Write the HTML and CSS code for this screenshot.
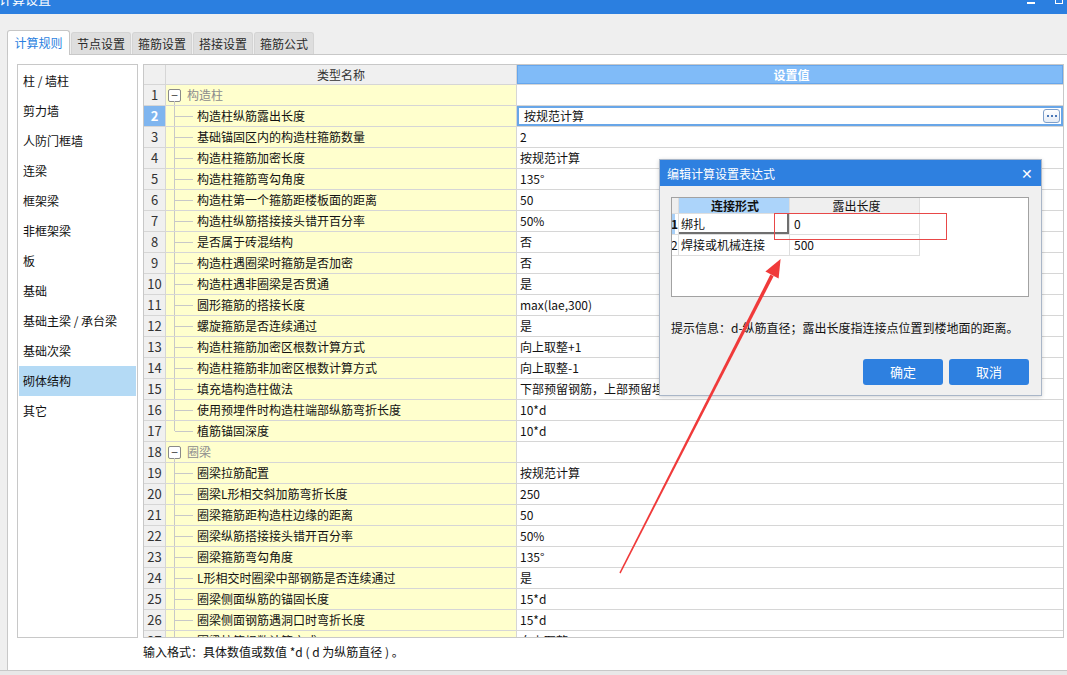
FILE: index.html
```html
<!DOCTYPE html>
<html lang="zh-CN">
<head>
<meta charset="utf-8">
<title>计算设置</title>
<link rel="stylesheet" href="styles.css">
</head>
<body>
<div class="window">
  <div class="titlebar">
    <span class="title">计算设置</span>
    <span class="win-min"></span>
    <span class="win-max"></span>
  </div>
  <div class="tabs">
    <div class="tab active">计算规则</div>
    <div class="tab">节点设置</div>
    <div class="tab">箍筋设置</div>
    <div class="tab">搭接设置</div>
    <div class="tab">箍筋公式</div>
  </div>
  <div class="panel">
    <div class="main">
      <div class="sidebar">
        <div class="side-item">柱 / 墙柱</div>
        <div class="side-item">剪力墙</div>
        <div class="side-item">人防门框墙</div>
        <div class="side-item">连梁</div>
        <div class="side-item">框架梁</div>
        <div class="side-item">非框架梁</div>
        <div class="side-item">板</div>
        <div class="side-item">基础</div>
        <div class="side-item">基础主梁 / 承台梁</div>
        <div class="side-item">基础次梁</div>
        <div class="side-item selected">砌体结构</div>
        <div class="side-item">其它</div>
      </div>
      <div class="grid">
        <div class="row head">
          <div class="num"></div>
          <div class="name">类型名称</div>
          <div class="val">设置值</div>
        </div>
        <div class="row group"><div class="num">1</div><div class="name"><span class="toggle">−</span><span class="gtext">构造柱</span></div><div class="val"></div></div>
        <div class="row child sel"><div class="num">2</div><div class="name">构造柱纵筋露出长度</div><div class="val"><span>按规范计算</span><span class="more"><i></i><i></i><i></i></span></div></div>
        <div class="row child"><div class="num">3</div><div class="name">基础锚固区内的构造柱箍筋数量</div><div class="val">2</div></div>
        <div class="row child"><div class="num">4</div><div class="name">构造柱箍筋加密长度</div><div class="val">按规范计算</div></div>
        <div class="row child"><div class="num">5</div><div class="name">构造柱箍筋弯勾角度</div><div class="val">135°</div></div>
        <div class="row child"><div class="num">6</div><div class="name">构造柱第一个箍筋距楼板面的距离</div><div class="val">50</div></div>
        <div class="row child"><div class="num">7</div><div class="name">构造柱纵筋搭接接头错开百分率</div><div class="val">50%</div></div>
        <div class="row child"><div class="num">8</div><div class="name">是否属于砖混结构</div><div class="val">否</div></div>
        <div class="row child"><div class="num">9</div><div class="name">构造柱遇圈梁时箍筋是否加密</div><div class="val">否</div></div>
        <div class="row child"><div class="num">10</div><div class="name">构造柱遇非圈梁是否贯通</div><div class="val">是</div></div>
        <div class="row child"><div class="num">11</div><div class="name">圆形箍筋的搭接长度</div><div class="val">max(lae,300)</div></div>
        <div class="row child"><div class="num">12</div><div class="name">螺旋箍筋是否连续通过</div><div class="val">是</div></div>
        <div class="row child"><div class="num">13</div><div class="name">构造柱箍筋加密区根数计算方式</div><div class="val">向上取整+1</div></div>
        <div class="row child"><div class="num">14</div><div class="name">构造柱箍筋非加密区根数计算方式</div><div class="val">向上取整-1</div></div>
        <div class="row child"><div class="num">15</div><div class="name">填充墙构造柱做法</div><div class="val">下部预留钢筋，上部预留埋件</div></div>
        <div class="row child"><div class="num">16</div><div class="name">使用预埋件时构造柱端部纵筋弯折长度</div><div class="val">10*d</div></div>
        <div class="row child last"><div class="num">17</div><div class="name">植筋锚固深度</div><div class="val">10*d</div></div>
        <div class="row group"><div class="num">18</div><div class="name"><span class="toggle">−</span><span class="gtext">圈梁</span></div><div class="val"></div></div>
        <div class="row child"><div class="num">19</div><div class="name">圈梁拉筋配置</div><div class="val">按规范计算</div></div>
        <div class="row child"><div class="num">20</div><div class="name">圈梁L形相交斜加筋弯折长度</div><div class="val">250</div></div>
        <div class="row child"><div class="num">21</div><div class="name">圈梁箍筋距构造柱边缘的距离</div><div class="val">50</div></div>
        <div class="row child"><div class="num">22</div><div class="name">圈梁纵筋搭接接头错开百分率</div><div class="val">50%</div></div>
        <div class="row child"><div class="num">23</div><div class="name">圈梁箍筋弯勾角度</div><div class="val">135°</div></div>
        <div class="row child"><div class="num">24</div><div class="name">L形相交时圈梁中部钢筋是否连续通过</div><div class="val">是</div></div>
        <div class="row child"><div class="num">25</div><div class="name">圈梁侧面纵筋的锚固长度</div><div class="val">15*d</div></div>
        <div class="row child"><div class="num">26</div><div class="name">圈梁侧面钢筋遇洞口时弯折长度</div><div class="val">15*d</div></div>
        <div class="row child"><div class="num">27</div><div class="name">圈梁拉筋根数计算方式</div><div class="val">向上取整+1</div></div>
      </div>
    </div>
    <div class="status">输入格式：具体数值或数值 *d ( d 为纵筋直径 ) 。</div>
  </div>
  <div class="footer"></div>
</div>

<div class="dialog">
  <div class="dlg-title">
    <span>编辑计算设置表达式</span>
    <span class="dlg-close">✕</span>
  </div>
  <div class="dlg-body">
    <div class="dlg-table">
      <div class="drow dhead">
        <div class="dnum"></div>
        <div class="dname">连接形式</div>
        <div class="dval">露出长度</div>
      </div>
      <div class="drow">
        <div class="dnum active">1</div>
        <div class="dname focus">绑扎</div>
        <div class="dval">0</div>
      </div>
      <div class="drow">
        <div class="dnum">2</div>
        <div class="dname">焊接或机械连接</div>
        <div class="dval">500</div>
      </div>
    </div>
    <div class="hint">提示信息：d-纵筋直径；露出长度指连接点位置到楼地面的距离。</div>
    <div class="buttons">
      <div class="btn">确定</div>
      <div class="btn">取消</div>
    </div>
  </div>
</div>

<div class="redbox"></div>

<svg class="arrow" width="1067" height="675" viewBox="0 0 1067 675">
  <polygon points="619.4,572.6 620.6,573.4 773.6,276.2 770.4,274.6" fill="#f03a3a"/>
  <polygon points="780.6,259 765.4,271.6 778.6,278.4" fill="#f03a3a"/>
</svg>
</body>
</html>
```
FILE: styles.css
```css
* { box-sizing: border-box; }
html, body { margin: 0; padding: 0; }
body {
  width: 1067px;
  height: 675px;
  overflow: hidden;
  position: relative;
  background: #efefef;
  font-family: "Noto Sans CJK SC", "Microsoft YaHei", sans-serif;
  font-size: 12px;
  color: #111;
}
.window { display: flex; flex-direction: column; height: 675px; }

/* title bar */
.titlebar {
  height: 14px;
  flex: none;
  background: #2b7fe0;
  color: #fff;
  display: flex;
  align-items: flex-start;
  overflow: hidden;
}
.title { font-size: 13px; line-height: 16px; margin-top: -9px; margin-left: -1px; }
.win-min { width: 8px; height: 2px; background: #fff; margin-top: 2px; margin-left: auto; }
.win-max { width: 8px; height: 4px; border: 1px solid #fff; border-top: 0; margin-left: 20px; margin-right: 4px; }

/* tabs */
.tabs {
  height: 40px;
  flex: none;
  display: flex;
  align-items: flex-end;
  gap: 1px;
  padding-left: 7px;
  position: relative;
  z-index: 2;
}
.tab {
  width: 60px;
  height: 22px;
  line-height: 21px;
  text-align: center;
  background: #dedede;
  border: 1px solid #d4d4d4;
  border-bottom: 0;
  border-radius: 3px 3px 0 0;
  color: #2a2a2a;
}
.tab.active {
  width: 63px;
  height: 25px;
  line-height: 24px;
  margin-bottom: -1px;
  background: #fff;
  border-color: #c6c6c6;
  color: #2b7fe0;
}

/* panel */
.panel {
  flex: 1;
  margin-left: 7px;
  background: #fff;
  border-top: 1px solid #c8c8c8;
  border-left: 1px solid #c8c8c8;
  display: flex;
  flex-direction: column;
}
.main {
  display: flex;
  gap: 5px;
  padding: 9px 0 0 9px;
  height: 583px;
  flex: none;
}
.sidebar {
  width: 121px;
  height: 574px;
  border: 1px solid #c8c8c8;
  padding: 1px;
}
.side-item { height: 30px; line-height: 30px; padding-left: 4px; white-space: nowrap; }
.side-item.selected { background: #b4daf5; }

/* grid */
.grid {
  width: 921px;
  height: 574px;
  border: 1px solid #c8c8c8;
  overflow: hidden;
}
.row {
  display: grid;
  grid-template-columns: 22px 351px 1fr;
  height: 21px;
}
.row > div {
  border-bottom: 1px solid #d6d6d6;
  line-height: 20px;
  white-space: nowrap;
  overflow: hidden;
}
.row .num { border-right: 1px solid #d6d6d6; background: #f0f0f0; text-align: center; font-size: 13px; color: #333; }
.row .name { border-right: 1px solid #d6d6d6; background: #ffffcd; position: relative; padding-left: 31px; }
.row .val { background: #fff; padding-left: 3px; }

.row.head { height: 20px; }
.row.head > div { line-height: 19px; }
.row.head .name { background: #f0f0f0; text-align: center; padding-left: 0; color: #333; }
.row.head .val {
  background: #80bbf8;
  box-shadow: inset 0 0 0 1px #66a6ec;
  color: #fff;
  font-weight: bold;
  text-align: center;
}

.row.child .name::before {
  content: "";
  position: absolute;
  left: 8px;
  top: 0;
  bottom: -1px;
  border-left: 1px solid #c8c8c8;
}
.row.child.last .name::before { bottom: 50%; }
.row.child .name::after {
  content: "";
  position: absolute;
  left: 9px;
  top: 10px;
  width: 18px;
  border-top: 1px solid #c8c8c8;
}
.row.group .name { padding-left: 2px; display: flex; align-items: center; }
.row.group .name::before {
  content: "";
  position: absolute;
  left: 8px;
  top: 16px;
  bottom: -1px;
  border-left: 1px solid #c8c8c8;
}
.toggle {
  width: 13px;
  height: 13px;
  border: 1px solid #8a8a8a;
  border-radius: 2px;
  background: #fff;
  line-height: 10px;
  font-size: 12px;
  text-align: center;
  color: #444;
  flex: none;
}
.gtext { margin-left: 6px; color: #8c8c8c; }

.row.sel .num { background: #7fb5ef; color: #fff; font-weight: bold; }
.row.sel .val {
  display: flex;
  align-items: center;
  padding-left: 7px;
  box-shadow: inset 0 0 0 2px #68a6e8;
}
.more {
  margin-left: auto;
  margin-right: 3px;
  width: 17px;
  height: 14px;
  border: 1px solid #7e9fca;
  border-radius: 3px;
  background: linear-gradient(#ffffff, #e4ebf5);
  display: flex;
  align-items: center;
  justify-content: center;
  gap: 2px;
  flex: none;
}
.more i {
  display: block;
  width: 2px;
  height: 2px;
  background: #4a78b8;
}

.status {
  height: 32px;
  line-height: 28px;
  padding-left: 135px;
  white-space: nowrap;
}
.footer { height: 5px; flex: none; background: #e8e8e8; border-top: 1px solid #c8c8c8; }

/* dialog */
.dialog {
  position: absolute;
  left: 659px;
  top: 159px;
  width: 383px;
  height: 237px;
  background: #f0f0f0;
  border: 1px solid #a9b6c8;
  box-shadow: 0 1px 4px rgba(0, 0, 0, 0.18);
  z-index: 5;
}
.dlg-title {
  height: 26px;
  background: #2e80e0;
  color: #fff;
  display: flex;
  align-items: center;
  padding: 0 8px 0 7px;
}
.dlg-close { margin-left: auto; font-size: 14px; line-height: 14px; }
.dlg-body { padding: 11px 12px 0 11px; }
.dlg-table {
  width: 358px;
  height: 100px;
  background: #fff;
  border: 1px solid #a2a2a2;
}
.drow {
  display: grid;
  grid-template-columns: 7px 111px 130px;
  height: 21px;
}
.drow > div {
  border-bottom: 1px solid #dedede;
  border-right: 1px solid #dedede;
  line-height: 20px;
  white-space: nowrap;
  overflow: hidden;
}
.drow.dhead { height: 16px; }
.drow.dhead > div { line-height: 15px; background: #efefef; text-align: center; }
.drow.dhead .dnum { background: #efefef; }
.drow.dhead .dname { background: #acd4fa; font-weight: bold; }
.dnum { font-weight: normal; font-size: 12px; text-indent: -1px; }
.dnum.active { font-weight: bold; background: linear-gradient(90deg, #a8d0f8 0 3px, #fff 3px); }
.dname { padding-left: 2px; }
.dname.focus { box-shadow: inset -2px -2px 0 #6f6f6f; }
.dval { padding-left: 4px; }
.hint { margin-top: 22px; line-height: 18px; white-space: nowrap; }
.buttons {
  display: flex;
  justify-content: flex-end;
  gap: 6px;
  margin-top: 22px;
}
.btn {
  width: 80px;
  height: 26px;
  line-height: 26px;
  text-align: center;
  background: #2e80e0;
  color: #fff;
  border-radius: 3px;
  font-size: 13px;
}

.redbox {
  position: absolute;
  left: 774px;
  top: 213px;
  width: 173px;
  height: 27px;
  border: 1px solid #e84848;
  z-index: 6;
}
.arrow {
  position: absolute;
  left: 0;
  top: 0;
  z-index: 7;
  pointer-events: none;
}
```
